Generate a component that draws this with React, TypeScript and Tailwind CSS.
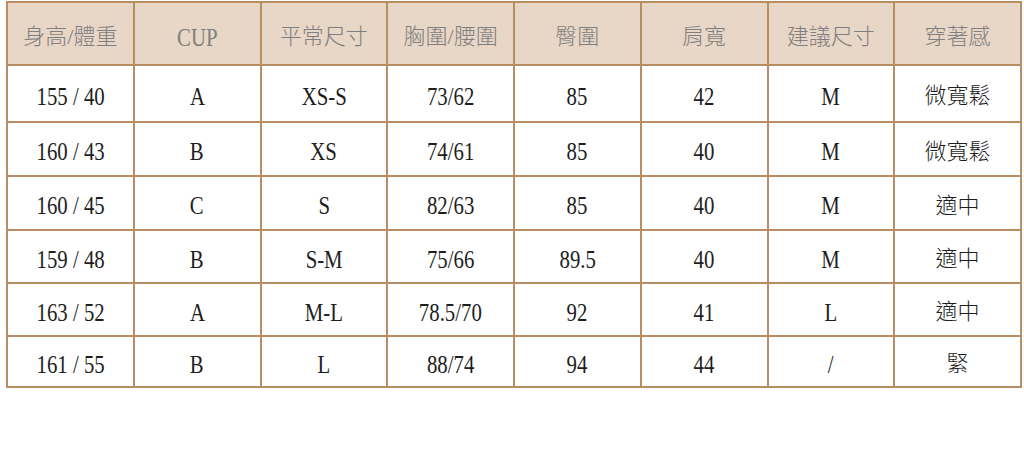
import React from 'react'

const headers = ['身高/體重', 'CUP', '平常尺寸', '胸圍/腰圍', '臀圍', '肩寬', '建議尺寸', '穿著感']

const rows = [
  { h: 'h-[57px]', cells: ['155 / 40', 'A', 'XS-S', '73/62', '85', '42', 'M', '微寬鬆'] },
  { h: 'h-[54px]', cells: ['160 / 43', 'B', 'XS', '74/61', '85', '40', 'M', '微寬鬆'] },
  { h: 'h-[54px]', cells: ['160 / 45', 'C', 'S', '82/63', '85', '40', 'M', '適中'] },
  { h: 'h-[53px]', cells: ['159 / 48', 'B', 'S-M', '75/66', '89.5', '40', 'M', '適中'] },
  { h: 'h-[53px]', cells: ['163 / 52', 'A', 'M-L', '78.5/70', '92', '41', 'L', '適中'] },
  { h: 'h-[51px]', cells: ['161 / 55', 'B', 'L', '88/74', '94', '44', '/', '緊'] }
]

const font = 'font-["Liberation_Serif","Noto_Sans_CJK_TC",serif]'
const cjk = /[\u4e00-\u9fff]/

// latin text in the picture is a tall, narrow serif; CJK glyphs are normal width
function CellText({ text }: { text: string }) {
  if (cjk.test(text)) {
    return <span className="text-[22px] font-light leading-none">{text}</span>
  }
  return (
    <span className="inline-block text-[26px] leading-none scale-x-[0.8] origin-center">
      {text}
    </span>
  )
}

export default function App() {
  return (
    <div className="w-[1024px] h-[463px] bg-white pt-px pl-[6px]">
      <table className={`w-[1016px] table-fixed border-collapse ${font}`}>
        <thead>
          <tr className="h-[63px] bg-[#e8d6c6]">
            {headers.map((h) => (
              <th
                key={h}
                className="border-2 border-[#b88d62] text-center font-normal text-[#7f7f7f] pt-[10px]"
              >
                <CellText text={h} />
              </th>
            ))}
          </tr>
        </thead>
        <tbody>
          {rows.map((r, i) => (
            <tr key={i} className={r.h}>
              {r.cells.map((c, j) => (
                <td
                  key={j}
                  className="border-2 border-[#b88d62] text-center text-[#1e1e1e] pt-[8px]"
                >
                  <CellText text={c} />
                </td>
              ))}
            </tr>
          ))}
        </tbody>
      </table>
    </div>
  )
}
